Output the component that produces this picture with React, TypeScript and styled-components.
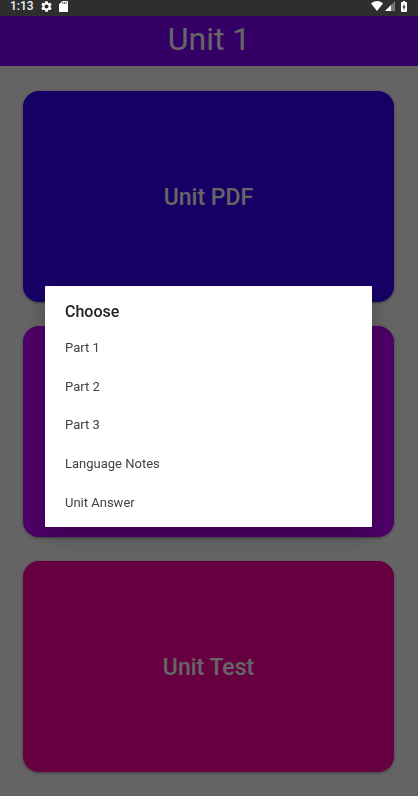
import React from "react";
import styled, { createGlobalStyle } from "styled-components";

const GlobalStyle = createGlobalStyle`
  *, *::before, *::after { box-sizing: border-box; }
  body { margin: 0; background: #646464; font-family: Roboto, "Noto Sans", sans-serif; }
  button { font: inherit; border: 0; cursor: pointer; }
`;

const Screen = styled.div`
  min-height: 100vh;
  display: flex;
  flex-direction: column;
  background: #fafafa;
`;

const StatusBar = styled.div`
  position: relative;
  z-index: 2;
  height: 16px;
  padding: 0 10px;
  display: flex;
  align-items: flex-start;
  justify-content: space-between;
  background: #2e2e2e;
  color: #f4f4f4;
`;

const StatusGroup = styled.div<{ $gap: number }>`
  display: flex;
  align-items: center;
  height: 12px;
  gap: ${({ $gap }) => $gap}px;
`;

const Clock = styled.time`
  font-size: 12px;
  line-height: 14px;
  font-weight: 500;
`;

const StatusIcon = styled.svg<{ $w: number; $h?: number }>`
  display: block;
  width: ${({ $w }) => $w}px;
  height: ${({ $w, $h }) => $h ?? $w}px;
  fill: #ffffff;
`;

const Header = styled.header`
  height: 50px;
  display: flex;
  justify-content: center;
  background: #8400ff;
`;

const Title = styled.h1`
  margin: 0;
  font-size: 32px;
  line-height: 46px;
  font-weight: 400;
  color: #ffffff;
`;

const CardList = styled.main`
  flex: 1;
  display: flex;
  flex-direction: column;
  gap: 24px;
  padding: 25px 24px 24px 23px;
`;

const UnitCard = styled.button<{ $color: string }>`
  flex: 1;
  min-height: 120px;
  padding: 3px 6px 0;
  border-radius: 16px;
  background: ${({ $color }) => $color};
  color: #ffffff;
  font-size: 23px;
  line-height: 28px;
  font-weight: 500;
  box-shadow: 0 1px 3px rgba(0, 0, 0, 0.4);
`;

const Scrim = styled.div`
  position: fixed;
  inset: 16px 0 0 0;
  z-index: 1;
  display: flex;
  align-items: center;
  justify-content: center;
  padding: 0 46px 0 45px;
  background: rgba(0, 0, 0, 0.6);
`;

const Dialog = styled.section`
  width: 100%;
  padding: 12px 0 5px;
  background: #ffffff;
  border-radius: 1px;
  box-shadow: 0 8px 20px rgba(0, 0, 0, 0.25);
`;

const DialogTitle = styled.h2`
  margin: 0 0 3px;
  padding: 0 20px;
  font-size: 16px;
  line-height: 28px;
  font-weight: 500;
  color: #212121;
`;

const OptionList = styled.ul`
  display: grid;
  grid-auto-rows: 1fr;
  height: 193px;
  margin: 0;
  padding: 0;
  list-style: none;
`;

const Option = styled.button`
  display: block;
  width: 100%;
  height: 100%;
  padding: 1px 20px 0;
  background: transparent;
  text-align: left;
  font-size: 13px;
  line-height: 20px;
  color: #424242;
`;

const cards = [
  { label: "Unit PDF", color: "#3700ff" },
  { label: "Unit Video", color: "#c000ff" },
  { label: "Unit Test", color: "#ff00a0" },
];

const options = ["Part 1", "Part 2", "Part 3", "Language Notes", "Unit Answer"];

export default function App() {
  return (
    <>
      <GlobalStyle />
      <Screen>
        <StatusBar>
          <StatusGroup $gap={7}>
            <Clock>1:13</Clock>
            <StatusIcon $w={11} viewBox="2 2 20 20" aria-label="Settings">
              <path d="M19.14 12.94c.04-.3.06-.61.06-.94 0-.32-.02-.64-.07-.94l2.03-1.58a.49.49 0 0 0 .12-.61l-1.92-3.32a.488.488 0 0 0-.59-.22l-2.39.96c-.5-.38-1.03-.7-1.62-.94l-.36-2.54a.484.484 0 0 0-.48-.41h-3.84c-.24 0-.43.17-.47.41l-.36 2.54c-.59.24-1.13.57-1.62.94l-2.39-.96c-.22-.08-.47 0-.59.22L2.74 8.87c-.12.21-.08.47.12.61l2.03 1.58c-.05.3-.09.63-.09.94s.02.64.07.94l-2.03 1.58a.49.49 0 0 0-.12.61l1.92 3.32c.12.22.37.29.59.22l2.39-.96c.5.38 1.03.7 1.62.94l.36 2.54c.05.24.24.41.48.41h3.84c.24 0 .44-.17.47-.41l.36-2.54c.59-.24 1.13-.56 1.62-.94l2.39.96c.22.08.47 0 .59-.22l1.92-3.32c.12-.22.07-.47-.12-.61l-2.01-1.58zM12 15.6A3.61 3.61 0 0 1 8.4 12c0-1.98 1.62-3.6 3.6-3.6s3.6 1.62 3.6 3.6-1.62 3.6-3.6 3.6z" />
            </StatusIcon>
            <StatusIcon $w={9} $h={11} viewBox="4 2 16 20" preserveAspectRatio="none" aria-label="Storage card">
              <path
                fillRule="evenodd"
                d="M18 2h-8L4 8v12c0 1.100.9 2 2 2h12c1.100 0 2-.9 2-2V4c0-1.100-.9-2-2-2zM10 4h1.500v3H10zM13 4h1.500v3H13zM16 4h1.500v3H16z"
              />
            </StatusIcon>
          </StatusGroup>
          <StatusGroup $gap={2}>
            <StatusIcon $w={12} $h={10} viewBox="0 0 24 20" preserveAspectRatio="none" aria-label="Wi-Fi">
              <path d="M12 20 0 5C3 2 7 0 12 0s9 2 12 5z" />
            </StatusIcon>
            <StatusIcon $w={10} viewBox="0 0 20 20" aria-label="Mobile signal">
              <path d="M0 20 20 0v20z" fillOpacity="0.35" />
              <path d="M0 20 12 8v12z" />
            </StatusIcon>
            <StatusIcon $w={11} viewBox="-2 0 22 22" aria-label="Battery charging">
              <path
                fillRule="evenodd"
                d="M10 0h4v2h2c1 0 2 1 2 2v16c0 1-1 2-2 2H8c-1 0-2-1-2-2V4c0-1 1-2 2-2h2zm3 5-4 8h2v6l4-8h-2z"
              />
            </StatusIcon>
          </StatusGroup>
        </StatusBar>
        <Header>
          <Title>Unit 1</Title>
        </Header>
        <CardList>
          {cards.map(({ label, color }) => (
            <UnitCard key={label} type="button" $color={color}>
              {label}
            </UnitCard>
          ))}
        </CardList>
      </Screen>
      <Scrim>
        <Dialog role="dialog" aria-modal="true" aria-labelledby="choose-title">
          <DialogTitle id="choose-title">Choose</DialogTitle>
          <OptionList>
            {options.map((option) => (
              <li key={option}>
                <Option type="button">{option}</Option>
              </li>
            ))}
          </OptionList>
        </Dialog>
      </Scrim>
    </>
  );
}
